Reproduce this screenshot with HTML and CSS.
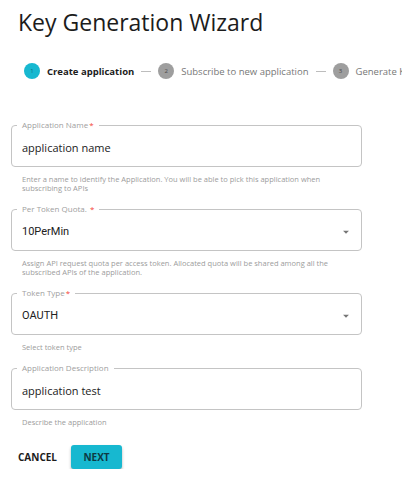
FILE: index.html
```html
<!DOCTYPE html>
<html lang="en">
<head>
<meta charset="utf-8">
<title>Key Generation Wizard</title>
<link rel="stylesheet" href="styles.css">
</head>
<body>
<div class="page">
  <h1 class="title">Key Generation Wizard</h1>

  <div class="stepper">
    <span class="step-icon active">1</span>
    <span class="step-label active">Create application</span>
    <span class="step-line"></span>
    <span class="step-icon">2</span>
    <span class="step-label">Subscribe to new application</span>
    <span class="step-line"></span>
    <span class="step-icon">3</span>
    <span class="step-label">Generate Keys</span>
  </div>

  <form class="form">
    <div class="field">
      <fieldset class="box">
        <legend class="label">Application Name<span class="req">*</span></legend>
        <div class="value">application name</div>
      </fieldset>
      <p class="helper">Enter a name to identify the Application. You will be able to pick this application when subscribing to APIs</p>
    </div>

    <div class="field">
      <fieldset class="box">
        <legend class="label">Per Token Quota. <span class="req">*</span></legend>
        <div class="value select"><span class="select-text">10PerMin</span>
          <svg class="arrow" width="14" height="14" viewBox="0 0 24 24"><path d="M7 10l5 5 5-5z" fill="#757575"/></svg>
        </div>
      </fieldset>
      <p class="helper">Assign API request quota per access token. Allocated quota will be shared among all the subscribed APIs of the application.</p>
    </div>

    <div class="field">
      <fieldset class="box">
        <legend class="label">Token Type<span class="req">*</span></legend>
        <div class="value select"><span class="select-text">OAUTH</span>
          <svg class="arrow" width="14" height="14" viewBox="0 0 24 24"><path d="M7 10l5 5 5-5z" fill="#757575"/></svg>
        </div>
      </fieldset>
      <p class="helper">Select token type</p>
    </div>

    <div class="field">
      <fieldset class="box">
        <legend class="label">Application Description</legend>
        <div class="value">application test</div>
      </fieldset>
      <p class="helper">Describe the application</p>
    </div>

    <div class="actions">
      <button type="button" class="btn-text">CANCEL</button>
      <button type="button" class="btn-primary">NEXT</button>
    </div>
  </form>
</div>
</body>
</html>
```

FILE: styles.css
```css
html, body {
  margin: 0;
  padding: 0;
  background: #ffffff;
}

body {
  font-family: "Open Sans", "Liberation Sans", sans-serif;
  color: #212121;
  width: 402px;
  overflow: hidden;
}

.page {
  padding-top: 6px;
}

.title {
  margin: 0 0 0 18px;
  font-size: 23px;
  font-weight: 400;
  line-height: 32px;
  color: #1c1c1c;
}

.stepper {
  display: flex;
  align-items: center;
  gap: 7px;
  height: 16px;
  margin-top: 25px;
  padding-left: 24px;
  white-space: nowrap;
  overflow: hidden;
}

.step-icon {
  flex: 0 0 16px;
  width: 16px;
  height: 16px;
  border-radius: 50%;
  background: #9e9e9e;
  color: #4a4a4a;
  font-size: 6px;
  line-height: 16px;
  text-align: center;
}

.step-icon.active {
  background: #17b8d0;
  color: #0f6f80;
}

.step-label {
  font-size: 9.5px;
  color: #777777;
}

.step-label.active {
  font-weight: 700;
  color: #1c1c1c;
  font-size: 9.5px;
}

.step-line {
  flex: 0 0 10px;
  height: 1px;
  background: #bdbdbd;
}

.form {
  margin: 41px 0 0 11px;
  width: 351px;
}

.field {
  margin-bottom: 11px;
}

.box {
  margin: 0;
  padding: 0 10px;
  border: 1px solid #c4c4c4;
  border-radius: 4px;
  min-width: 0;
}

.label {
  margin-left: -5px;
  padding: 0 5px;
  font-size: 8px;
  line-height: 10px;
  color: #a0a0a0;
}

.req {
  color: #f44336;
  margin-left: 1px;
}

.value {
  padding: 10px 0;
  font-size: 11px;
  line-height: 16px;
  color: #212121;
}

.select {
  display: flex;
  align-items: center;
  justify-content: space-between;
  font-family: Roboto, "Liberation Sans", sans-serif;
}

.arrow {
  display: block;
  margin-right: -2px;
}

.helper {
  margin: 8px 11px 0 11px;
  font-size: 7.5px;
  line-height: 9px;
  color: #9c9c9c;
}

.actions {
  display: flex;
  align-items: center;
  gap: 14px;
  margin: 18px 0 0 7px;
}

.btn-text,
.btn-primary {
  font-family: "Open Sans", "Liberation Sans", sans-serif;
  font-weight: 700;
  font-size: 10px;
  border: 0;
  cursor: pointer;
  padding: 0;
}

.btn-text {
  background: transparent;
  color: #1c1c1c;
  height: 24px;
}

.btn-primary {
  width: 51px;
  height: 24px;
  border-radius: 3px;
  background: #17b8d0;
  color: #0d3b44;
  box-shadow: 0 2px 3px rgba(0, 0, 0, 0.3);
}
```
